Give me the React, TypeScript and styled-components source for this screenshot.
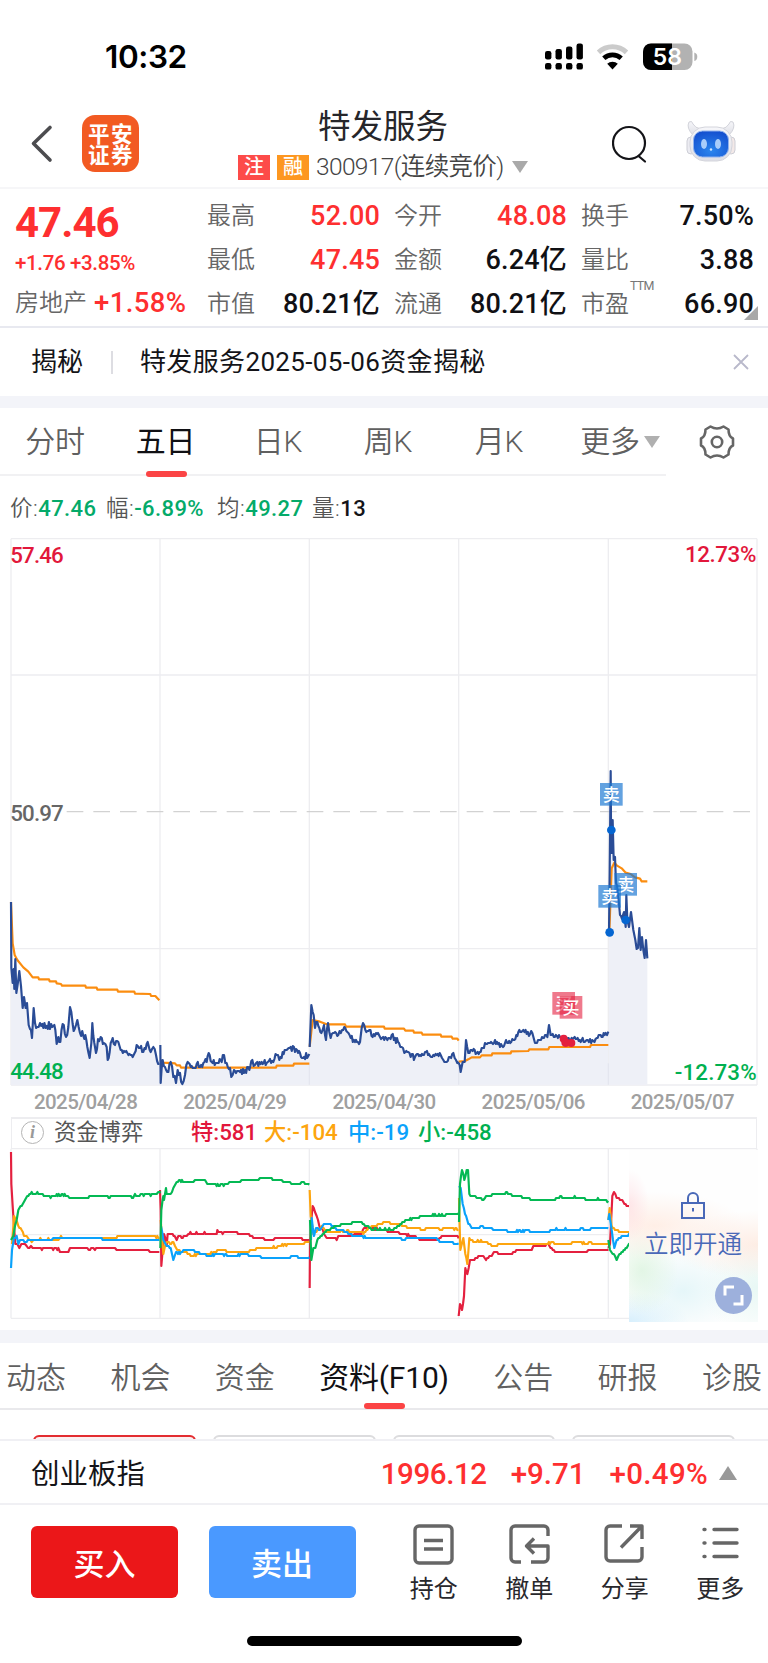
import React from "react";
import styled, { createGlobalStyle } from "styled-components";

const RED = "#fe2f30";
const GREEN = "#00b050";

const Global = createGlobalStyle`
  * { box-sizing: border-box; }
  body { margin: 0; background: #fff; }
`;

const Screen = styled.div`
  width: 768px;
  height: 1663px;
  overflow: hidden;
  background: #fff;
  color: #141418;
  display: flex;
  flex-direction: column;
  font-family: Roboto, "Noto Sans CJK SC", sans-serif;
  white-space: nowrap;
`;

const Text = styled.span<{ $s: number; $c?: string; $w?: number; $ls?: number }>`
  font-size: ${(p) => p.$s}px;
  line-height: 1;
  color: ${(p) => p.$c ?? "inherit"};
  font-weight: ${(p) => p.$w ?? 400};
  letter-spacing: ${(p) => p.$ls ?? 0}px;
`;

/* ---------- status bar ---------- */

const StatusBar = styled.div`
  height: 90px;
  flex: none;
  padding: 24px 70px 0 105px;
  display: flex;
  align-items: center;
  justify-content: space-between;
`;

const Clock = styled.span`
  font: 600 31.5px/1 Inter, sans-serif;
  letter-spacing: -0.4px;
  color: #000;
`;

const StatusIcons = () => (
  <svg width="153" height="28" viewBox="0 0 153 28">
    {[[0, 8], [10.5, 6], [21, 3.5], [31.5, 0.5]].map(([x, y]) => (
      <g key={x}>
        <rect x={x} y={y} width="6.4" height={16.5 - y} rx="2.2" />
        <rect x={x} y="20" width="6.4" height="6.6" rx="2.2" />
      </g>
    ))}
    <g fill="none">
      <path d="M53.5 9.4a20.5 20.5 0 0 1 28 0" stroke="#cbcbcb" strokeWidth="5" />
      <path d="M58.8 15.3a13 13 0 0 1 17.4 0" stroke="#000" strokeWidth="4.8" />
    </g>
    <path d="M67.5 26.5l-5.3-5.7a7.6 7.6 0 0 1 10.6 0z" />
    <clipPath id="bat"><rect x="98" y="0.5" width="49.5" height="26.5" rx="8" /></clipPath>
    <g clipPath="url(#bat)">
      <rect x="98" y="0" width="50" height="28" fill="#b2b2b2" />
      <rect x="98" y="0" width="29" height="28" />
    </g>
    <path d="M149.3 9.5q3 1 3 4.3t-3 4.3z" fill="#b2b2b2" />
    <text x="122.3" y="22" textAnchor="middle" fontFamily="Inter, sans-serif" fontWeight="600" fontSize="23" fill="#fff">58</text>
  </svg>
);

/* ---------- header ---------- */

const Header = styled.header`
  height: 99px;
  flex: none;
  border-bottom: 2px solid #f6f6f8;
  display: grid;
  grid-template-columns: 82px 57px 1fr 74px 49px 33px;
  align-items: center;
  & > svg { display: block; }
`;

const Logo = styled.div`
  width: 57px;
  height: 57px;
  margin-top: 8px;
  border-radius: 13px;
  background: #f25a22;
  color: #fff;
  font: 700 21.5px/21px "Noto Sans CJK SC", sans-serif;
  letter-spacing: 1.5px;
  text-align: center;
  padding: 7px 0 0 1px;
`;

const TitleBlock = styled.div`
  align-self: start;
  padding: 21px 0 0 99px;
`;

const Title = styled.h1`
  margin: 0 0 0 80px;
  font-size: 32.5px;
  line-height: 32px;
  font-weight: 400;
  color: #26262a;
`;

const SubTitle = styled.div`
  margin-top: 11px;
  padding-right: 84px;
  display: flex;
  align-items: center;
  height: 26px;
`;

const Tag = styled.span<{ $bg: string }>`
  width: 32px;
  height: 25px;
  margin-right: 7px;
  background: ${(p) => p.$bg};
  color: #fff;
  font-size: 20px;
  line-height: 25px;
  font-weight: 500;
  text-align: center;
`;

const Down = styled.i<{ $w: number; $h: number; $c?: string }>`
  width: 0;
  height: 0;
  border: solid transparent;
  border-width: ${(p) => p.$h}px ${(p) => p.$w / 2}px 0;
  border-top-color: ${(p) => p.$c ?? "#a9a9a9"};
`;

const RobotSvg = styled.svg`
  margin-top: 3px;
`;

const Robot = () => (
  <RobotSvg width="50" height="42" viewBox="0 0 50 42">
    <defs>
      <radialGradient id="face" cx="0.5" cy="0.75" r="0.75">
        <stop offset="0" stopColor="#2b86ee" />
        <stop offset="1" stopColor="#1450cf" />
      </radialGradient>
      <linearGradient id="shell" x1="0" y1="0" x2="0" y2="1">
        <stop offset="0" stopColor="#f7f7fa" />
        <stop offset="1" stopColor="#dedfe6" />
      </linearGradient>
    </defs>
    <path d="M7 15Q0 8 3 2q3-2 4 2 2 4 8 5zM43 15q7-7 4-13-3-2-4 2-2 4-8 5z" fill="url(#shell)" stroke="#d2d3da" strokeWidth="1" />
    <rect x="1" y="17" width="8" height="17" rx="4" fill="#ececf2" stroke="#cdced6" />
    <rect x="41" y="17" width="8" height="17" rx="4" fill="#f3e9e8" stroke="#cdced6" />
    <rect x="4" y="7" width="42" height="34" rx="15" fill="url(#shell)" stroke="#d4d5dc" />
    <rect x="7.500" y="11" width="35" height="26" rx="9" fill="url(#face)" stroke="#8fb2ee" />
    <ellipse cx="18" cy="24" rx="3" ry="5" fill="#a9cdfa" />
    <ellipse cx="32" cy="24" rx="3" ry="5" fill="#a9cdfa" />
    <circle cx="25" cy="29.500" r="1.200" fill="#d6e7fd" />
  </RobotSvg>
);

/* ---------- quote ---------- */

const Quote = styled.section`
  height: 139px;
  flex: none;
  border-bottom: 2px solid #e8e9f0;
  display: grid;
  grid-template-columns: 193px 173px 173px 173px;
  column-gap: 14px;
  position: relative;
`;

const PriceCol = styled.div`
  padding: 11px 0 0 15px;
  display: flex;
  flex-direction: column;
`;

const PriceLine = styled.div<{ $h: number }>`
  height: ${(p) => p.$h}px;
  display: flex;
  align-items: center;
  gap: 7px;
`;

const StatCol = styled.div`
  padding-top: 5px;
`;

const Stat = styled.div`
  height: 44px;
  display: flex;
  align-items: center;
  justify-content: space-between;
  position: relative;
`;

const Ttm = styled.span`
  position: absolute;
  left: 49px;
  top: -2px;
  font-size: 12.5px;
  line-height: 12px;
  letter-spacing: -0.8px;
  color: #777;
`;

const Corner = styled.i`
  position: absolute;
  right: 10px;
  bottom: 6px;
  border: solid transparent;
  border-width: 0 0 14px 14px;
  border-bottom-color: #a8a8a8;
`;

const Strip = styled.div`
  height: 68px;
  flex: none;
  padding: 0 19px 0 31px;
  display: flex;
  align-items: center;
`;

const Rule = styled.i`
  width: 2px;
  height: 23px;
  margin: 0 27px 0 28px;
  background: #dddde2;
`;

const Push = styled.span`
  flex: 1;
`;

const Band = styled.div<{ $h: number }>`
  height: ${(p) => p.$h}px;
  flex: none;
  background: #f3f4f9;
`;

/* ---------- period tabs ---------- */

const Periods = styled.nav`
  height: 68px;
  flex: none;
  display: flex;
`;

const PeriodList = styled.div`
  width: 666px;
  border-bottom: 2px solid #f1f1f3;
  padding-right: 1px;
  display: grid;
  grid-template-columns: 110px 111px 114px 106px 116px 108px;
`;

const Period = styled.div<{ $on?: boolean; $inset?: number }>`
  position: relative;
  padding-left: ${(p) => p.$inset ?? 0}px;
  display: flex;
  align-items: center;
  justify-content: center;
  gap: 4px;
  font-size: 30px;
  letter-spacing: -0.3px;
  line-height: 68px;
  color: ${(p) => (p.$on ? "#101014" : "#606060")};
  font-weight: ${(p) => (p.$on ? 400 : 350)};
`;

const Mark = styled.i`
  position: absolute;
  left: 50%;
  bottom: -1px;
  width: 41px;
  height: 6.5px;
  margin-left: -20px;
  border-radius: 3px;
  background: #fb4445;
`;

const Gear = styled.div`
  flex: 1;
  display: flex;
  align-items: center;
  justify-content: center;
  padding-right: 1px;
`;

const Info = styled.div`
  height: 62px;
  flex: none;
  padding: 3px 0 0 10px;
  display: grid;
  grid-template-columns: 96px 111px 95px 100px;
  align-items: center;
`;

/* ---------- charts ---------- */

type P = number[];

/* Resamples a polyline every few units, adds a little deterministic noise
   and snaps the value to whole ticks, like minute data on a price grid. */
const ticks = (pts: P, amp: number, seed: number, tick = 6): string => {
  let s = seed;
  const rnd = () => {
    s = (s * 16807) % 2147483647;
    return s / 2147483647 - 0.5;
  };
  const out: string[] = [];
  for (let i = 0; i < pts.length - 2; i += 2) {
    const [x0, y0, x1, y1] = pts.slice(i, i + 4);
    out.push(`${x0},${Math.round(y0 / tick) * tick}`);
    const n = Math.floor((x1 - x0) / 3);
    for (let k = 1; k < n; k++) {
      const y = y0 + ((y1 - y0) * k) / n + rnd() * amp;
      out.push(`${(x0 + ((x1 - x0) * k) / n).toFixed(1)},${Math.round(y / tick) * tick}`);
    }
  }
  out.push(pts.slice(-2).join(","));
  return out.join(" ");
};

/* Price chart: three units per pixel, y measured from 342px below the top. */
const PRICE: P[] = [
  [33,66,34,265,38,310,41,268,43,328,46,238,49,340,54,305,58,272,63,318,68,385,72,350,77,385,81,370,86,435,90,448,96,475,101,385,105,428,112,440,120,430,140,438,160,438,166,450,170,492,175,470,181,485,188,432,198,470,205,440,210,382,218,432,224,448,232,420,240,460,250,468,256,465,262,500,269,535,274,490,277,428,283,490,288,520,294,478,302,470,312,490,320,500,323,540,332,490,338,475,345,495,355,485,362,510,372,512,382,520,395,525,404,518,410,495,420,505,430,515,437,508,443,485,452,515,460,500,468,525,478,550],
  [481,495,482,610,488,540,495,560,505,575,512,545,520,590,528,610,533,570,540,580,547,612,555,585,563,545,572,560,590,552,600,562,610,548,620,545,626,518,635,545,650,550,665,545,672,525,680,550,690,565,694,590,702,570,720,575,735,570,748,570,757,540,765,555,785,545,800,550,820,545,830,525,838,540,848,515,860,510,872,500,885,515,900,520,912,530,928,522],
  [929,500,934,375,938,395,941,405,945,445,952,425,958,445,964,460,972,435,978,480,984,430,992,475,1002,460,1015,465,1026,450,1033,440,1042,455,1052,475,1065,485,1080,485,1085,445,1089,430,1096,450,1108,450,1118,470,1128,460,1140,470,1162,480,1175,465,1185,475,1197,490,1205,500,1213,520,1225,515,1232,530,1245,530,1260,525,1275,515,1290,528,1310,525,1322,525,1330,540,1340,545,1350,530,1360,520,1368,540,1376,545],
  [1376,550,1382,575,1388,545,1394,545,1398,480,1405,520,1415,510,1430,520,1445,505,1455,490,1470,490,1485,480,1500,500,1515,490,1540,480,1555,455,1570,450,1580,462,1597,460,1605,490,1620,480,1635,465,1642,470,1647,435,1652,465,1680,470,1700,480,1730,478,1760,480,1780,482,1790,475,1808,470,1817,458,1825,455],
  [1827,157,1829,-20,1832,-327,1833,-170,1835,-80,1838,-180,1841,-60,1845,-70,1848,10,1852,20,1856,60,1860,105,1866,118,1872,95,1877,140,1879,45,1882,120,1887,140,1893,95,1900,150,1906,180,1910,208,1914,205,1918,145,1922,210,1926,170,1930,210,1934,235,1938,180,1942,235],
];
const AMPS = [24, 22, 18, 16, 6];

const AVERAGE: P[] = [
  [33,66,38,190,44,225,52,240,70,262,85,275,98,292,115,292,117,298,147,298,149,304,168,304,170,310,183,312,186,317,256,317,258,323,290,323,292,329,352,329,354,335,403,335,405,341,451,342,453,348,466,348,478,361],
  [481,540,490,548,525,550,530,556,540,556,543,563,828,563,830,557,880,557,882,551,928,551],
  [929,500,938,420,960,425,980,433,1035,433,1038,440,1152,440,1154,446,1212,446,1216,452,1240,452,1242,458,1265,458,1268,464,1322,464,1324,470,1355,470,1358,476,1372,476,1376,482],
  [1376,545,1395,543,1405,538,1415,532,1440,532,1445,526,1475,526,1477,520,1532,520,1534,514,1585,513,1588,508,1645,508,1648,501,1770,501,1773,495,1825,495],
  [1828,157,1835,-35,1843,-52,1850,-44,1865,-35,1877,-22,1892,-18,1905,-8,1920,-4,1925,4,1942,4],
];

const GRID_X = [33, 480, 928, 1376, 1825, 2271];

const PriceSvg = styled.svg`
  display: block;
  flex: none;
`;

const Marker = ({ x, y, word, bg }: { x: number; y: number; word: string; bg: string }) => (
  <g>
    <rect x={x - 34} y={y - 34} width="68" height="68" fill={bg} />
    <text x={x} y={y + 19} textAnchor="middle" fontSize="51" fontWeight="500" fill="#fff">{word}</text>
  </g>
);

const PriceChart = () => (
  <PriceSvg width="768" height="548" viewBox="0 0 2304 1644" fontFamily="Roboto, 'Noto Sans CJK SC', sans-serif">
    <g stroke="#ededf0" strokeWidth="4">
      {GRID_X.map((x) => <line key={x} x1={x} x2={x} y1="2" y2="1641" />)}
      {[2, 411, 1232, 1641].map((y) => <line key={y} x1="33" x2="2271" y1={y} y2={y} />)}
    </g>
    <line x1="200" x2="2271" y1="821" y2="821" stroke="#d2d2d2" strokeWidth="4" strokeDasharray="50 30" />
    <g transform="translate(0 1026)">
      {PRICE.map((p, i) => {
        const line = ticks(p, AMPS[i], 91 + i * 37, 3);
        return <polygon key={i} points={`${p[0]},614 ${line} ${p[p.length - 2]},614`} fill="#eef0f7" />;
      })}
      <g stroke="#e4e6ef" strokeWidth="4">
        {GRID_X.slice(1, 5).map((x) => <line key={x} x1={x} x2={x} y1="550" y2="614" />)}
      </g>
      <g fill="none" strokeLinejoin="round" strokeWidth="6.5">
        {AVERAGE.map((p, i) => <polyline key={i} points={p.join(" ")} stroke="#fb8d10" />)}
        {PRICE.map((p, i) => <polyline key={i} points={ticks(p, AMPS[i], 91 + i * 37, 3)} stroke="#2a4c96" />)}
      </g>
    </g>
    <g fill="#0566d1">
      <circle cx="1834" cy="876" r="13" />
      <circle cx="1829" cy="1183" r="13" />
      <circle cx="1877" cy="1146" r="13" />
    </g>
    <g fill="#e4203f">
      <circle cx="1691" cy="1502" r="12" />
      <circle cx="1697" cy="1514" r="13" />
      <circle cx="1714" cy="1515" r="12" />
    </g>
    <Marker x={1834} y={769} word="卖" bg="rgba(25,118,210,.68)" />
    <Marker x={1877} y={1039} word="卖" bg="rgba(25,118,210,.68)" />
    <Marker x={1829} y={1075} word="卖" bg="rgba(25,118,210,.68)" />
    <Marker x={1691} y={1396} word="买" bg="rgba(228,32,63,.6)" />
    <Marker x={1713} y={1408} word="买" bg="rgba(228,32,63,.6)" />
    <g fontSize="67" fontWeight="500">
      <text x="31" y="76" fill="#e2173b" textLength="160">57.46</text>
      <text x="2055" y="71" fill="#e2173b" textLength="214">12.73%</text>
      <text x="31" y="850" fill="#666" textLength="160">50.97</text>
      <text x="31" y="1622" fill={GREEN} textLength="160">44.48</text>
      <text x="2024" y="1626" fill={GREEN} textLength="246">-12.73%</text>
    </g>
  </PriceSvg>
);

const Dates = styled.div`
  height: 31px;
  flex: none;
  padding: 0 11px;
  display: grid;
  grid-template-columns: repeat(5, 1fr);
  text-align: center;
  font-size: 20.5px;
  line-height: 32px;
  letter-spacing: -0.6px;
  font-weight: 500;
  color: #a0a0a0;
`;

const FundBar = styled.div`
  margin: 0 11px;
  height: 31px;
  flex: none;
  border: solid #ededf0;
  border-width: 2px 1px 0;
  padding-bottom: 3px;
  display: grid;
  grid-template-columns: 42px 137px 73px 84px 70px 80px;
  align-items: center;
`;

const InfoMark = styled.span`
  width: 23px;
  height: 23px;
  margin-left: 9px;
  border: 1.5px solid #b5b5b5;
  border-radius: 50%;
  font: italic 700 18px/20px "Liberation Serif", serif;
  text-align: center;
  color: #999;
`;

const FLOW: [string, P][] = [
  ["#e4203f", [33,125,34,220,38,290,42,350,46,400,55,405,58,412,64,400,75,402,80,408,88,415,93,408,98,416,175,416,180,425,205,425,210,414,262,416,270,418,280,412,285,418,308,413,345,414,350,419,445,420,450,425,478,426]],
  ["#e4203f", [480,242,482,300,484,467,488,420,492,370,500,405,503,370,515,370,530,388,535,378,545,382,560,380,565,370,650,370,652,362,668,370,672,364,705,366,720,372,750,375,760,382,790,385,795,390,820,388,825,383,905,385,908,389,928,390]],
  ["#e4203f", [929,535,930,400,934,330,938,285,945,305,950,320,958,345,965,355,972,370,980,383,1000,382,1010,388,1015,377,1060,375,1085,370,1092,353,1115,355,1150,360,1170,365,1195,366,1200,372,1240,378,1265,390,1290,392,1315,388,1325,377,1370,377,1376,385]],
  ["#e4203f", [1376,620,1380,580,1386,600,1392,560,1396,475,1402,490,1410,452,1420,450,1435,440,1450,440,1458,447,1475,435,1485,425,1495,430,1530,432,1555,420,1595,418,1600,408,1630,407,1645,404,1665,425,1760,425,1765,420,1825,418]],
  ["#e4203f", [1825,415,1830,400,1837,260,1842,245,1850,262,1860,268,1870,275,1880,290,1890,290]],
  ["#fda50f", [36,400,40,350,42,315,48,330,55,350,65,358,72,375,80,378,88,390,95,395,100,388,175,388,180,382,300,383,350,382,352,377,410,377,440,380,445,377,478,382]],
  ["#fda50f", [482,330,490,430,495,410,500,395,510,400,520,398,525,410,535,420,545,425,560,428,572,437,600,432,640,428,655,420,680,423,700,425,740,428,760,418,785,413,830,412,850,405,880,402,905,400,928,395]],
  ["#fda50f", [929,242,932,320,940,370,955,360,965,350,980,365,1020,363,1060,364,1090,370,1105,355,1115,350,1130,345,1150,337,1165,335,1175,340,1200,342,1215,350,1235,356,1260,352,1262,358,1315,354,1320,358,1345,353,1375,358]],
  ["#fda50f", [1377,265,1379,350,1381,420,1390,385,1396,430,1402,460,1408,385,1420,395,1440,393,1455,395,1465,402,1485,408,1500,402,1560,400,1595,402,1640,402,1660,395,1667,403,1710,402,1720,396,1760,400,1770,396,1780,402,1825,402]],
  ["#fda50f", [1825,330,1829,295,1835,345,1845,360,1860,365,1875,365,1890,370]],
  ["#0aa2fb", [33,473,36,420,42,385,50,380,55,400,60,388,80,395,90,388,155,388,160,383,305,383,308,389,478,389]],
  ["#0aa2fb", [483,350,490,390,500,405,512,415,520,447,528,428,540,430,550,420,575,422,585,425,600,430,620,436,660,433,700,436,740,433,760,440,780,438,785,443,870,443,880,438,895,442,928,442]],
  ["#0aa2fb", [933,390,935,325,942,380,948,355,960,358,968,345,985,340,995,345,1010,357,1030,362,1045,370,1060,376,1085,378,1100,383,1140,386,1200,385,1215,388,1240,383,1310,386,1325,397,1345,395,1365,400,1376,400]],
  ["#0aa2fb", [1377,225,1382,235,1388,280,1395,310,1405,340,1415,352,1435,355,1445,348,1455,355,1475,352,1480,358,1510,360,1530,366,1560,362,1590,363,1600,366,1645,367,1660,358,1730,358,1770,357,1790,352,1825,355]],
  ["#0aa2fb", [1825,330,1828,310,1835,360,1843,415,1850,390,1865,380,1890,375]],
  ["#04b954", [33,390,40,375,45,345,50,330,55,300,65,285,75,268,85,255,95,248,108,252,112,243,115,254,138,256,142,260,168,260,170,254,200,256,208,265,265,265,268,260,402,260,405,254,415,260,422,254,470,254,475,248,482,248]],
  ["#04b954", [481,415,484,300,490,260,492,270,498,235,500,253,512,253,520,235,530,215,537,212,555,215,580,217,585,210,615,212,622,220,650,225,680,224,688,217,720,217,725,211,775,210,780,205,800,203,812,203,818,210,845,212,850,217,870,218,878,223,900,222,905,217,915,219,928,224]],
  ["#04b954", [930,330,934,450,940,415,946,412,955,385,965,378,980,362,1000,352,1020,345,1045,343,1060,336,1085,335,1095,345,1115,357,1180,358,1195,348,1210,335,1240,325,1260,320,1275,316,1335,315,1345,312,1376,310]],
  ["#04b954", [1377,335,1380,220,1386,180,1390,190,1393,210,1400,180,1404,180,1408,250,1415,260,1422,255,1430,265,1440,262,1450,272,1455,262,1480,252,1515,254,1518,248,1530,250,1540,258,1570,262,1585,265,1605,271,1665,271,1668,262,1715,262,1745,262,1760,268,1800,268,1825,273]],
  ["#04b954", [1825,390,1830,420,1838,430,1845,435,1850,450,1855,435,1868,425,1880,415,1890,400]],
];

const FlowWrap = styled.div`
  height: 182px;
  flex: none;
  position: relative;
  & > svg { display: block; }
`;

const FlowChart = () => (
  <svg width="768" height="174" viewBox="0 114 2304 522">
    <g stroke="#ededf0" strokeWidth="4">
      {GRID_X.map((x) => <line key={x} x1={x} x2={x} y1="116" y2="625" />)}
      {[116, 374, 625].map((y) => <line key={y} x1="33" x2="2271" y1={y} y2={y} />)}
    </g>
    <g fill="none" strokeWidth="6.5" strokeLinejoin="round">
      {FLOW.map(([c, p], i) => <polyline key={i} points={ticks(p, 2.5, 17 + i * 53)} stroke={c} />)}
    </g>
  </svg>
);

const Unlock = styled.div`
  position: absolute;
  left: 629px;
  top: 2px;
  width: 129px;
  height: 172px;
  background:
    radial-gradient(ellipse 20px 36px at 0 32%, rgba(255, 214, 220, .55), transparent),
    radial-gradient(ellipse 90px 34px at 100% 55%, rgba(255, 226, 212, .6), transparent),
    radial-gradient(ellipse 90px 34px at 20% 44%, rgba(255, 232, 220, .7), transparent),
    radial-gradient(ellipse 36px 44px at 10% 70%, rgba(214, 242, 216, .65), transparent),
    radial-gradient(ellipse 60px 44px at 42% 82%, rgba(216, 242, 246, .65), transparent),
    radial-gradient(ellipse 60px 30px at 0 100%, rgba(202, 234, 252, .75), transparent),
    radial-gradient(ellipse 56px 50px at 100% 80%, rgba(226, 246, 242, .8), transparent),
    #fefefe;
  display: flex;
  flex-direction: column;
  align-items: center;
  padding: 42px 1px 0 0;
  gap: 14px;
`;

const Expand = styled.div`
  position: absolute;
  left: 715px;
  top: 129px;
  width: 37px;
  height: 37px;
  border-radius: 50%;
  background: #9db0dc;
  display: flex;
  align-items: center;
  justify-content: center;
`;

/* ---------- lower tabs and footer ---------- */

const Sections = styled.nav`
  height: 67px;
  flex: none;
  border-bottom: 2px solid #e9e9ec;
  padding: 2px 6px 0;
  display: flex;
  justify-content: space-between;
`;

const Section = styled.div<{ $on?: boolean }>`
  position: relative;
  font-size: 30px;
  letter-spacing: ${(p) => (p.$on ? -0.2 : 0)}px;
  line-height: 66px;
  color: ${(p) => (p.$on ? "#101014" : "#606060")};
  font-weight: ${(p) => (p.$on ? 400 : 350)};
`;

const Peek = styled.div`
  height: 29px;
  flex: none;
  padding: 25px 33px 0;
  display: grid;
  grid-template-columns: repeat(4, 1fr);
  gap: 17px;
  overflow: hidden;
`;

const Card = styled.div<{ $on?: boolean }>`
  height: 40px;
  border: 2px solid ${(p) => (p.$on ? "#e32c30" : "#dcdcde")};
  border-radius: 6px;
  background: ${(p) => (p.$on ? "#fdf0f0" : "#fff")};
`;

const IndexRow = styled.div`
  height: 66px;
  flex: none;
  border: solid #f0f0f4;
  border-width: 2px 0;
  padding: 6px 31px 0;
  display: flex;
  align-items: center;
`;

const Gap = styled.span`
  width: 24px;
`;

const Up = styled(Down)<{ $w: number; $h: number }>`
  border-width: 0 ${(p) => p.$w / 2}px ${(p) => p.$h}px;
  border-bottom-color: #999;
  margin: -5px 0 0 11px;
`;

const Footer = styled.footer`
  height: 131px;
  flex: none;
  padding: 21px 0 0 31px;
  display: flex;
`;

const Trade = styled.button<{ $bg: string }>`
  width: 147.5px;
  height: 71.5px;
  margin-right: 30.5px;
  padding: 0 0 1px;
  border: 0;
  border-radius: 6px;
  background: ${(p) => p.$bg};
  color: #fff;
  font: 500 31px/1 "Noto Sans CJK SC", sans-serif;
`;

const Tools = styled.div`
  display: grid;
  grid-template-columns: repeat(4, 95.5px);
`;

const Tool = styled.div`
  display: flex;
  flex-direction: column;
  align-items: center;
  gap: 12px;
  font-size: 24px;
  line-height: 24px;
  color: #28282c;
  svg { display: block; margin-top: -2px; }
`;

const Home = styled.div`
  width: 275px;
  height: 10px;
  flex: none;
  margin: 0 auto;
  border-radius: 5px;
  background: #000;
`;

const ICONS: [string, React.ReactNode][] = [
  ["持仓", <><rect x="2" y="2" width="37" height="37" rx="4" /><path d="M11 16.5h19M11 25h19" /></>],
  ["撤单", <><path d="M39 12V6a4 4 0 0 0-4-4H6a4 4 0 0 0-4 4v28a4 4 0 0 0 4 4h6M22 38h13a4 4 0 0 0 4-4V22H18M25 14.5L17.5 22l7.5 7.5" /></>],
  ["分享", <><path d="M18 2H6a4 4 0 0 0-4 4v27a4 4 0 0 0 4 4h28a4 4 0 0 0 4-4V23M26 2h12v13M38 2L17 23.5" /></>],
  ["更多", <><path d="M14 5.5h23M14 19h23M14 32.5h23" strokeLinecap="round" /><path d="M4 5.5h1M4 19h1M4 32.5h1" strokeLinecap="round" /></>],
];

const stats = [
  [["最高", "52.00", RED], ["最低", "47.45", RED], ["市值", "80.21亿", ""]],
  [["今开", "48.08", RED], ["金额", "6.24亿", ""], ["流通", "80.21亿", ""]],
  [["换手", "7.50%", ""], ["量比", "3.88", ""], ["市盈", "66.90", ""]],
];

const infos = [
  ["价:", "47.46", "#04aa69"],
  ["幅:", "-6.89%", "#04aa69"],
  ["均:", "49.27", "#04aa69"],
  ["量:", "13", "#141418"],
];

const funds = [
  ["特:581", "#e2173b"],
  ["大:-104", "#fda50f"],
  ["中:-19", "#0aa2fb"],
  ["小:-458", GREEN],
];

export default function App() {
  return (
    <Screen>
      <Global />
      <StatusBar>
        <Clock>10:32</Clock>
        <StatusIcons />
      </StatusBar>

      <Header>
        <svg width="82" height="99" viewBox="0 90 82 99" fill="none" stroke="#4c4c4f" strokeWidth="3.6" strokeLinecap="round" strokeLinejoin="round">
          <path d="M50 127.5L33.5 143.5 50 160" />
        </svg>
        <Logo>平安<br />证券</Logo>
        <TitleBlock>
          <Title>特发服务</Title>
          <SubTitle>
            <Tag $bg="#fd4b49">注</Tag>
            <Tag $bg="#fd9720">融</Tag>
            <Text $s={24.5} $c="#444" $w={350} $ls={-0.65}>300917(连续竞价)</Text>
            <Push />
            <Down $w={16} $h={12} />
          </SubTitle>
        </TitleBlock>
        <svg width="74" height="99" viewBox="612 90 74 99" fill="none" stroke="#141418" strokeWidth="2.2" strokeLinecap="round">
          <circle cx="629" cy="143" r="16" />
          <path d="M638.5 156l6.5 5.5" />
        </svg>
        <Robot />
      </Header>

      <Quote>
        <PriceCol>
          <PriceLine $h={46}><Text $s={42} $w={700} $c={RED} $ls={-1}>47.46</Text></PriceLine>
          <PriceLine $h={34}><Text $s={20.5} $w={500} $c={RED} $ls={-0.35}>+1.76 +3.85%</Text></PriceLine>
          <PriceLine $h={46}>
            <Text $s={24} $c="#666" $w={350}>房地产</Text>
            <Text $s={27.5} $w={500} $c={RED} $ls={0.4}>+1.58%</Text>
          </PriceLine>
        </PriceCol>
        {stats.map((col, i) => (
          <StatCol key={i}>
            {col.map(([k, v, c]) => (
              <Stat key={k}>
                <Text $s={24} $c="#666" $w={350}>{k}</Text>
                {k === "市盈" && <Ttm>TTM</Ttm>}
                <Text $s={27} $w={500} $c={c || "#101014"} $ls={0.2}>{v}</Text>
              </Stat>
            ))}
          </StatCol>
        ))}
        <Corner />
      </Quote>

      <Strip>
        <Text $s={26}>揭秘</Text>
        <Rule />
        <Text $s={26} $ls={0.35}>特发服务2025-05-06资金揭秘</Text>
        <Push />
        <svg width="16" height="16" viewBox="0 0 16 16" stroke="#b9b9cb" strokeWidth="1.8"><path d="M1 1l14 14M15 1L1 15" /></svg>
      </Strip>
      <Band $h={12} />

      <Periods>
        <PeriodList>
          <Period>分时</Period>
          <Period $on>五日<Mark /></Period>
          <Period>日K</Period>
          <Period>周K</Period>
          <Period>月K</Period>
          <Period $inset={18}>更多<Down $w={16} $h={12} $c="#b0b0b0" /></Period>
        </PeriodList>
        <Gear>
          <svg width="36" height="36" viewBox="0 0 36 36" fill="none" stroke="#666" strokeWidth="2.6" strokeLinejoin="round">
            <path d="M11.5 2.5Q18 6.5 24.5 2.5L29.5 5.5Q29.5 12.5 34 14.5V21.5Q29.5 23.5 29.5 30.5L24.5 33.5Q18 29.5 11.5 33.5L6.5 30.5Q6.5 23.5 2 21.5V14.5Q6.5 12.5 6.5 5.5Z" />
            <circle cx="18" cy="18" r="5.2" />
          </svg>
        </Gear>
      </Periods>

      <Info>
        {infos.map(([k, v, c]) => (
          <span key={k}>
            <Text $s={22.5} $c="#555" $w={350} $ls={0.5}>{k}</Text>
            <Text $s={22} $w={500} $c={c} $ls={0.4}>{v}</Text>
          </span>
        ))}
      </Info>

      <PriceChart />
      <Dates>
        {["2025/04/28", "2025/04/29", "2025/04/30", "2025/05/06", "2025/05/07"].map((d) => <span key={d}>{d}</span>)}
      </Dates>
      <FundBar>
        <InfoMark>i</InfoMark>
        <Text $s={22.3} $c="#555">资金博弈</Text>
        {funds.map(([t, c]) => <Text key={t} $s={22.3} $w={500} $c={c}>{t}</Text>)}
      </FundBar>
      <FlowWrap>
        <FlowChart />
        <Unlock>
          <svg width="24" height="27" viewBox="0 0 24 27" fill="none" stroke="#4a69b8" strokeWidth="2">
            <rect x="1" y="11" width="22" height="15" />
            <path d="M7 11V6a5 5 0 0 1 10 0v5M12 16v3.5" />
          </svg>
          <Text $s={24.5} $c="#4a69b8" $w={350}>立即开通</Text>
        </Unlock>
        <Expand>
          <svg width="21" height="21" viewBox="0 0 21 21" fill="none" stroke="#fff" strokeWidth="3">
            <path d="M2 10.5V2h9M10.5 19H19v-9" />
          </svg>
        </Expand>
      </FlowWrap>
      <Band $h={13} />

      <Sections>
        <Section>动态</Section>
        <Section>机会</Section>
        <Section>资金</Section>
        <Section $on>资料(F10)<Mark /></Section>
        <Section>公告</Section>
        <Section>研报</Section>
        <Section>诊股</Section>
      </Sections>
      <Peek>
        <Card $on />
        <Card />
        <Card />
        <Card />
      </Peek>
      <IndexRow>
        <Text $s={28.5}>创业板指</Text>
        <Push />
        <Text $s={29.5} $c={RED} $w={500} $ls={-0.4}>1996.12</Text>
        <Gap />
        <Text $s={29.5} $c={RED} $w={500}>+9.71</Text>
        <Gap />
        <Text $s={29.5} $c={RED} $w={500} $ls={0.3}>+0.49%</Text>
        <Up $w={19} $h={14} />
      </IndexRow>
      <Footer>
        <Trade $bg="#eb1719">买入</Trade>
        <Trade $bg="#4a99ff">卖出</Trade>
        <Tools>
          {ICONS.map(([label, art]) => (
            <Tool key={label}>
              <svg width="41" height="41" viewBox="0 0 41 41" fill="none" stroke="#666" strokeWidth="3.4" strokeLinejoin="round">{art}</svg>
              {label}
            </Tool>
          ))}
        </Tools>
      </Footer>
      <Home />
    </Screen>
  );
}
